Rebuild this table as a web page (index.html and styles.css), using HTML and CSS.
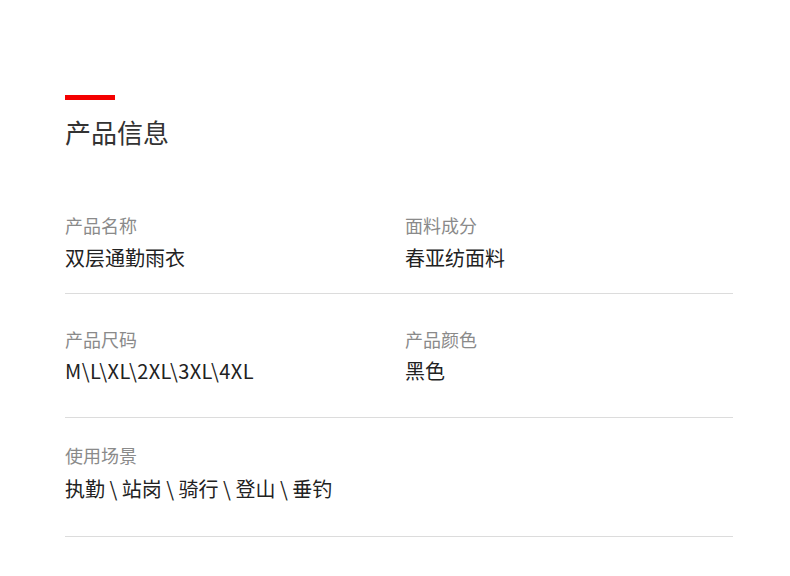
FILE: index.html
```html
<!DOCTYPE html>
<html lang="zh-CN">
<head>
<meta charset="utf-8">
<title>产品信息</title>
<link rel="stylesheet" href="styles.css">
</head>
<body>
<div class="page">
  <div class="bar"></div>
  <h1 class="title">产品信息</h1>
  <div class="specs">
    <div class="row row-1">
      <div class="cell">
        <div class="label">产品名称</div>
        <div class="value">双层通勤雨衣</div>
      </div>
      <div class="cell">
        <div class="label">面料成分</div>
        <div class="value">春亚纺面料</div>
      </div>
    </div>
    <div class="row row-2">
      <div class="cell">
        <div class="label">产品尺码</div>
        <div class="value value-latin">M\L\XL\2XL\3XL\4XL</div>
      </div>
      <div class="cell">
        <div class="label">产品颜色</div>
        <div class="value">黑色</div>
      </div>
    </div>
    <div class="row row-3">
      <div class="cell">
        <div class="label">使用场景</div>
        <div class="value">执勤 \ 站岗 \ 骑行 \ 登山 \ 垂钓</div>
      </div>
    </div>
  </div>
</div>
</body>
</html>
```

FILE: styles.css
```css
html, body {
  margin: 0;
  padding: 0;
  background: #fff;
}
body {
  font-family: "Noto Sans CJK SC", "Noto Sans", sans-serif;
}
.page {
  padding: 95px 57px 0 65px;
}
.bar {
  width: 50px;
  height: 5px;
  background: #f40000;
}
.title {
  margin: 14px 0 0;
  font-size: 26px;
  line-height: 36px;
  font-weight: 400;
  color: #333;
}
.specs {
  margin-top: 62px;
}
.row {
  display: grid;
  grid-template-columns: 340px 1fr;
  border-bottom: 1px solid #dcdcdc;
}
.row-1 { padding: 0 0 21px; }
.row-2 { padding: 32px 0 32px; }
.row-3 { padding: 24px 0 33px; }
.label {
  font-size: 18px;
  line-height: 26px;
  color: #8a8a8a;
}
.value {
  margin-top: 6px;
  font-size: 20px;
  line-height: 28px;
  color: #222;
}
.row-2 .value {
  margin-top: 5px;
}
.row-3 .value {
  margin-top: 7px;
}
.value-latin {
  letter-spacing: 0.4px;
}
```
